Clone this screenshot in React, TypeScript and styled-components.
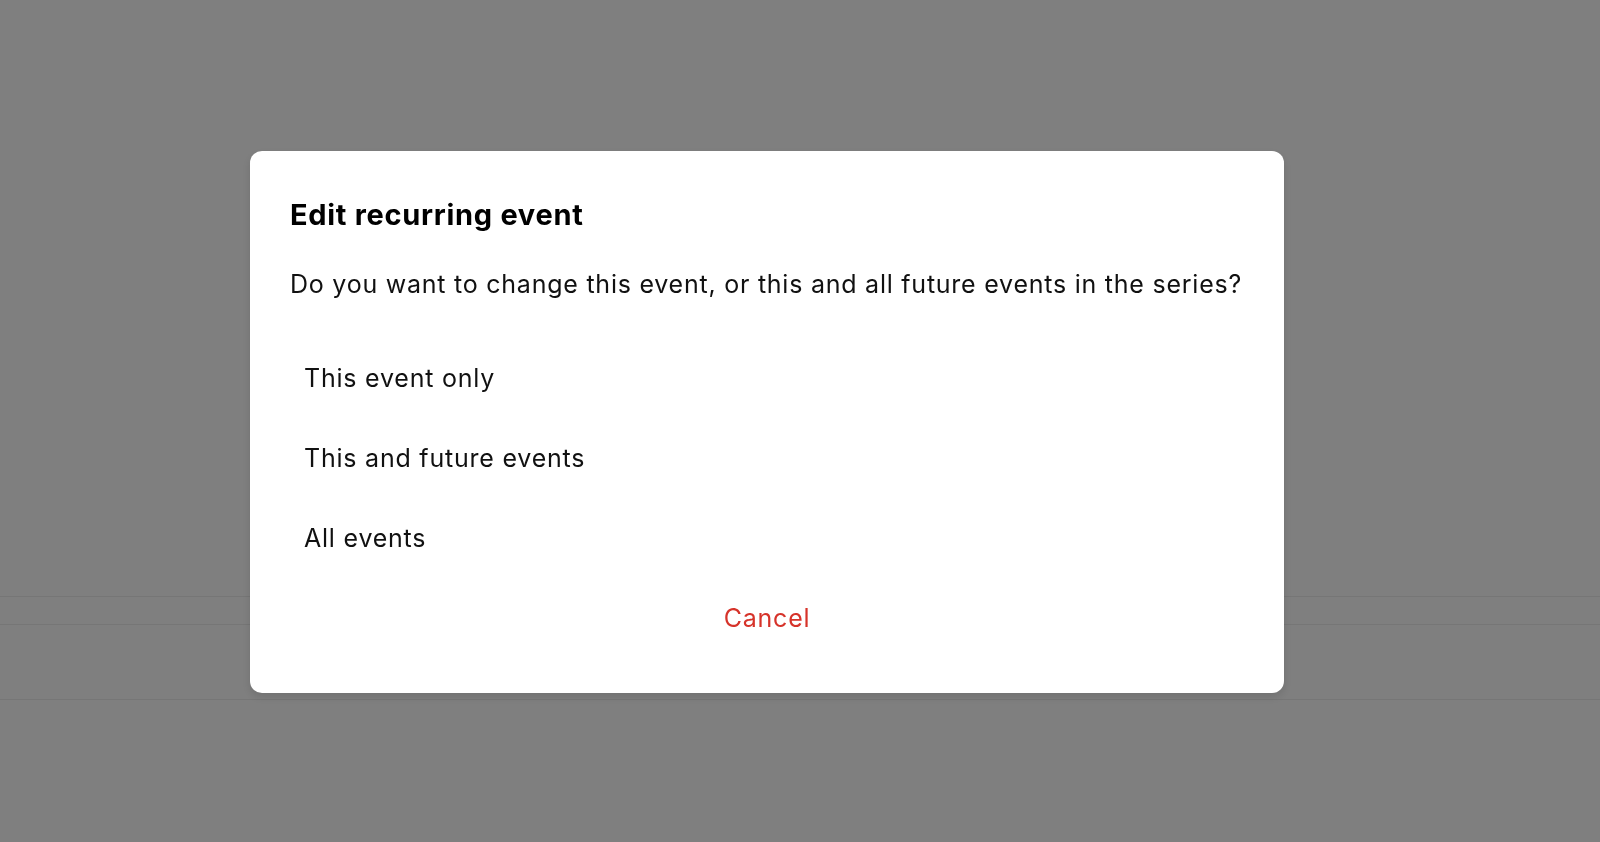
import React from 'react';
import styled, { createGlobalStyle } from 'styled-components';

const GlobalStyle = createGlobalStyle`
  html, body {
    margin: 0;
    padding: 0;
    background: #ffffff;
    font-family: Inter, "Noto Sans", "Liberation Sans", sans-serif;
  }
  * {
    box-sizing: border-box;
  }
`;

const Page = styled.div`
  height: 842px;
  display: flex;
  flex-direction: column;
  background: #ffffff;
`;

const PageSpacer = styled.div`
  height: 597px;
  border-bottom: 1px solid #ececec;
`;

const PageRow = styled.div<{ $height: number }>`
  height: ${(p) => p.$height}px;
  border-bottom: 1px solid #ececec;
`;

const Overlay = styled.div`
  position: fixed;
  inset: 0;
  background: rgba(0, 0, 0, 0.5);
  display: flex;
  align-items: flex-start;
  padding: 151px 0 0 250px;
`;

const Dialog = styled.div`
  width: 1034px;
  background: #ffffff;
  border-radius: 12px;
  padding: 44px 40px 35px;
  display: flex;
  flex-direction: column;
  box-shadow: 0 4px 10px rgba(0, 0, 0, 0.12);
`;

const Title = styled.h2`
  margin: 0;
  font-size: 29px;
  line-height: 40px;
  font-weight: 700;
  color: #000000;
  letter-spacing: 0.7px;
`;

const Message = styled.p`
  margin: 33px 0 0;
  font-size: 25px;
  line-height: 32px;
  color: #111111;
  letter-spacing: 0.76px;
`;

const Options = styled.div`
  margin-top: 38px;
  display: flex;
  flex-direction: column;
`;

const OptionButton = styled.button<{ $danger?: boolean }>`
  height: 80px;
  padding: 0 14px;
  border: none;
  background: transparent;
  font-family: inherit;
  font-size: 25px;
  line-height: 32px;
  letter-spacing: 0.78px;
  text-align: ${(p) => (p.$danger ? 'center' : 'left')};
  color: ${(p) => (p.$danger ? '#d6332a' : '#111111')};
  cursor: pointer;
  border-radius: 8px;
`;

const options = ['This event only', 'This and future events', 'All events'];

const App = () => {
  return (
    <>
      <GlobalStyle />
      <Page>
        <PageSpacer />
        <PageRow $height={28} />
        <PageRow $height={75} />
      </Page>
      <Overlay>
        <Dialog role="dialog">
          <Title>Edit recurring event</Title>
          <Message>
            Do you want to change this event, or this and all future events in the series?
          </Message>
          <Options>
            {options.map((o) => (
              <OptionButton key={o}>{o}</OptionButton>
            ))}
            <OptionButton $danger>Cancel</OptionButton>
          </Options>
        </Dialog>
      </Overlay>
    </>
  );
};

export default App;
